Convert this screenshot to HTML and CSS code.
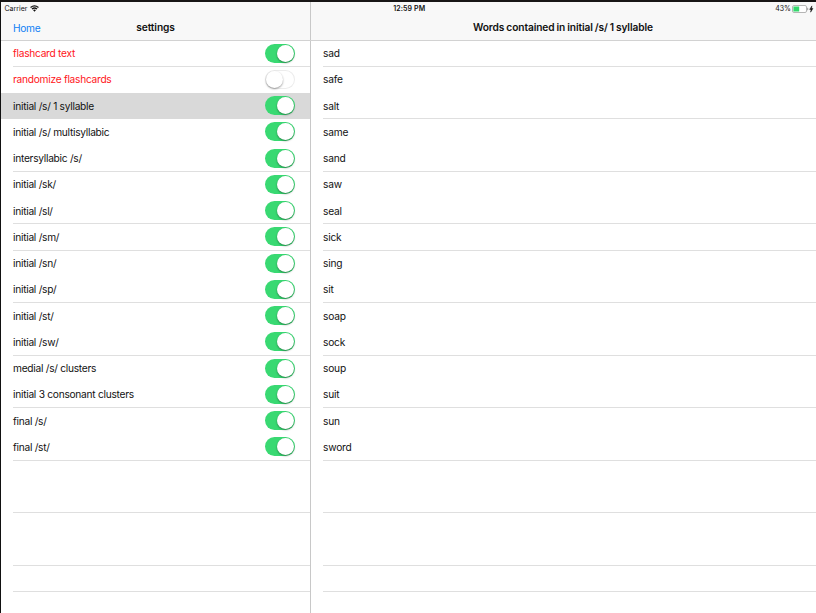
FILE: index.html
```
<!DOCTYPE html>
<html lang="en">
<head>
<meta charset="utf-8">
<title>settings</title>
<link rel="stylesheet" href="styles.css">
</head>
<body>
<div class="screen">
  <header class="top">
    <div class="status">
      <div class="carrier"><span>Carrier</span>
        <svg class="wifi" viewBox="0 0 16 12"><path d="M1 4.2Q8-1.6 15 4.2M3.5 7Q8 3.2 12.5 7" fill="none" stroke="#111" stroke-width="2.2"/><path d="M5.3 8.8Q8 6.6 10.7 8.8L8 11.8Z" fill="#111"/></svg>
      </div>
      <div class="clock">12:59 PM</div>
      <div class="power"><span>43%</span>
        <svg class="battery" viewBox="0 0 22 8"><rect x=".5" y=".5" width="14" height="7" rx="1.5" fill="#fff" stroke="#b5b5b5"/><rect x="1.4" y="1.5" width="5.8" height="5" fill="#35d76d"/><path d="M15.5 2.8q1.2 1.2 0 2.4z" fill="#999" stroke="#999" stroke-width=".5"/><path d="M19.9.9L17.7 4.4h1.4l-.5 2.8 2.3-3.7h-1.4z" fill="#111" stroke="#111" stroke-width=".5"/></svg>
      </div>
    </div>
    <div class="bars">
      <div class="bar"><span class="home">Home</span><h1>settings</h1></div>
      <div class="bar"><h1>Words contained in initial /s/ 1 syllable</h1></div>
    </div>
  </header>
  <main>
    <ul class="list settings">
      <li class="red line"><span>flashcard text</span><i class="switch on"></i></li>
      <li class="red"><span>randomize flashcards</span><i class="switch"></i></li>
      <li class="selected"><span>initial /s/ 1 syllable</span><i class="switch on"></i></li>
      <li><span>initial /s/ multisyllabic</span><i class="switch on"></i></li>
      <li class="line"><span>intersyllabic /s/</span><i class="switch on"></i></li>
      <li><span>initial /sk/</span><i class="switch on"></i></li>
      <li class="line"><span>initial /sl/</span><i class="switch on"></i></li>
      <li class="line"><span>initial /sm/</span><i class="switch on"></i></li>
      <li><span>initial /sn/</span><i class="switch on"></i></li>
      <li class="line"><span>initial /sp/</span><i class="switch on"></i></li>
      <li><span>initial /st/</span><i class="switch on"></i></li>
      <li class="line"><span>initial /sw/</span><i class="switch on"></i></li>
      <li><span>medial /s/ clusters</span><i class="switch on"></i></li>
      <li class="line"><span>initial 3 consonant clusters</span><i class="switch on"></i></li>
      <li><span>final /s/</span><i class="switch on"></i></li>
      <li class="line"><span>final /st/</span><i class="switch on"></i></li>
      <li></li>
      <li class="line"></li>
      <li></li>
      <li class="line"></li>
      <li class="line"></li>
    </ul>
    <ul class="list words">
      <li class="line"><span>sad</span></li>
      <li><span>safe</span></li>
      <li class="line"><span>salt</span></li>
      <li><span>same</span></li>
      <li class="line"><span>sand</span></li>
      <li><span>saw</span></li>
      <li class="line"><span>seal</span></li>
      <li class="line"><span>sick</span></li>
      <li><span>sing</span></li>
      <li class="line"><span>sit</span></li>
      <li><span>soap</span></li>
      <li class="line"><span>sock</span></li>
      <li><span>soup</span></li>
      <li class="line"><span>suit</span></li>
      <li><span>sun</span></li>
      <li class="line"><span>sword</span></li>
      <li></li>
      <li class="line"></li>
      <li></li>
      <li class="line"></li>
      <li class="line"></li>
    </ul>
  </main>
</div>
</body>
</html>
```
FILE: styles.css
```
* { box-sizing: border-box; }
body {
  margin: 0;
  background: #fff;
  color: #111;
  font: 10.2px/14px Inter, "Liberation Sans", sans-serif;
}
.screen {
  display: flex;
  flex-direction: column;
  height: 613px;
  overflow: hidden;
  border-top: 2px solid #181616;
  border-left: 1px solid #111;
}
.top {
  height: 39px;
  flex: none;
  background: linear-gradient(#c8c8c8, #c8c8c8) 309px 0 / 1px 100% no-repeat #f8f8f8;
  border-bottom: 1px solid #d2d2d2;
}
.status {
  display: grid;
  grid-template-columns: 1fr auto 1fr;
  align-items: center;
  height: 12px;
  padding: 1px 2px 0 3.5px;
  font-size: 7px;
  line-height: 11px;
}
.carrier, .power { display: flex; align-items: center; gap: 3px; }
.power { justify-content: flex-end; gap: 1px; }
.clock { font-weight: 600; letter-spacing: .1px; }
.wifi { width: 9px; height: 7px; }
.battery { width: 22px; height: 8px; }
.bars { display: grid; grid-template-columns: 309px 1fr; }
.bar {
  display: grid;
  grid-template-columns: 1fr auto 1fr;
  align-items: center;
  height: 26px;
  padding: 0 12px;
}
h1 {
  grid-column: 2;
  margin: 0;
  font-size: 10.2px;
  font-weight: 600;
  line-height: 14px;
  letter-spacing: -.1px;
  word-spacing: -.5px;
}
.home { color: #0f80f5; padding-top: 2px; letter-spacing: -.3px; }
main { display: grid; grid-template-columns: 310px 1fr; flex: 1; }
.list { margin: -.5px 0 0; padding: 0; list-style: none; }
.settings { border-right: 1px solid #c8c8c8; letter-spacing: -.27px; }
.words { letter-spacing: -.2px; }
.list li {
  display: flex;
  align-items: center;
  justify-content: space-between;
  height: 26.25px;
  padding: 0 15px 1px 12px;
}
.line { background: linear-gradient(#dfdfdf, #dfdfdf) 12px 100% / 100% 1px no-repeat; }
.red { color: #ff1420; }
.selected { background: #d9d9d9; }
.switch {
  display: flex;
  align-items: center;
  width: 30.5px;
  height: 19px;
  border-radius: 9.5px;
  padding: 1px;
  background: #fff;
  box-shadow: inset 0 0 0 1px #ececec;
}
.switch::before {
  content: "";
  width: 17px;
  height: 17px;
  border-radius: 50%;
  background: #fff;
  box-shadow: 0 1px 2px rgba(0, 0, 0, .4);
}
.switch.on { justify-content: flex-end; background: #39d972; box-shadow: none; }
```
